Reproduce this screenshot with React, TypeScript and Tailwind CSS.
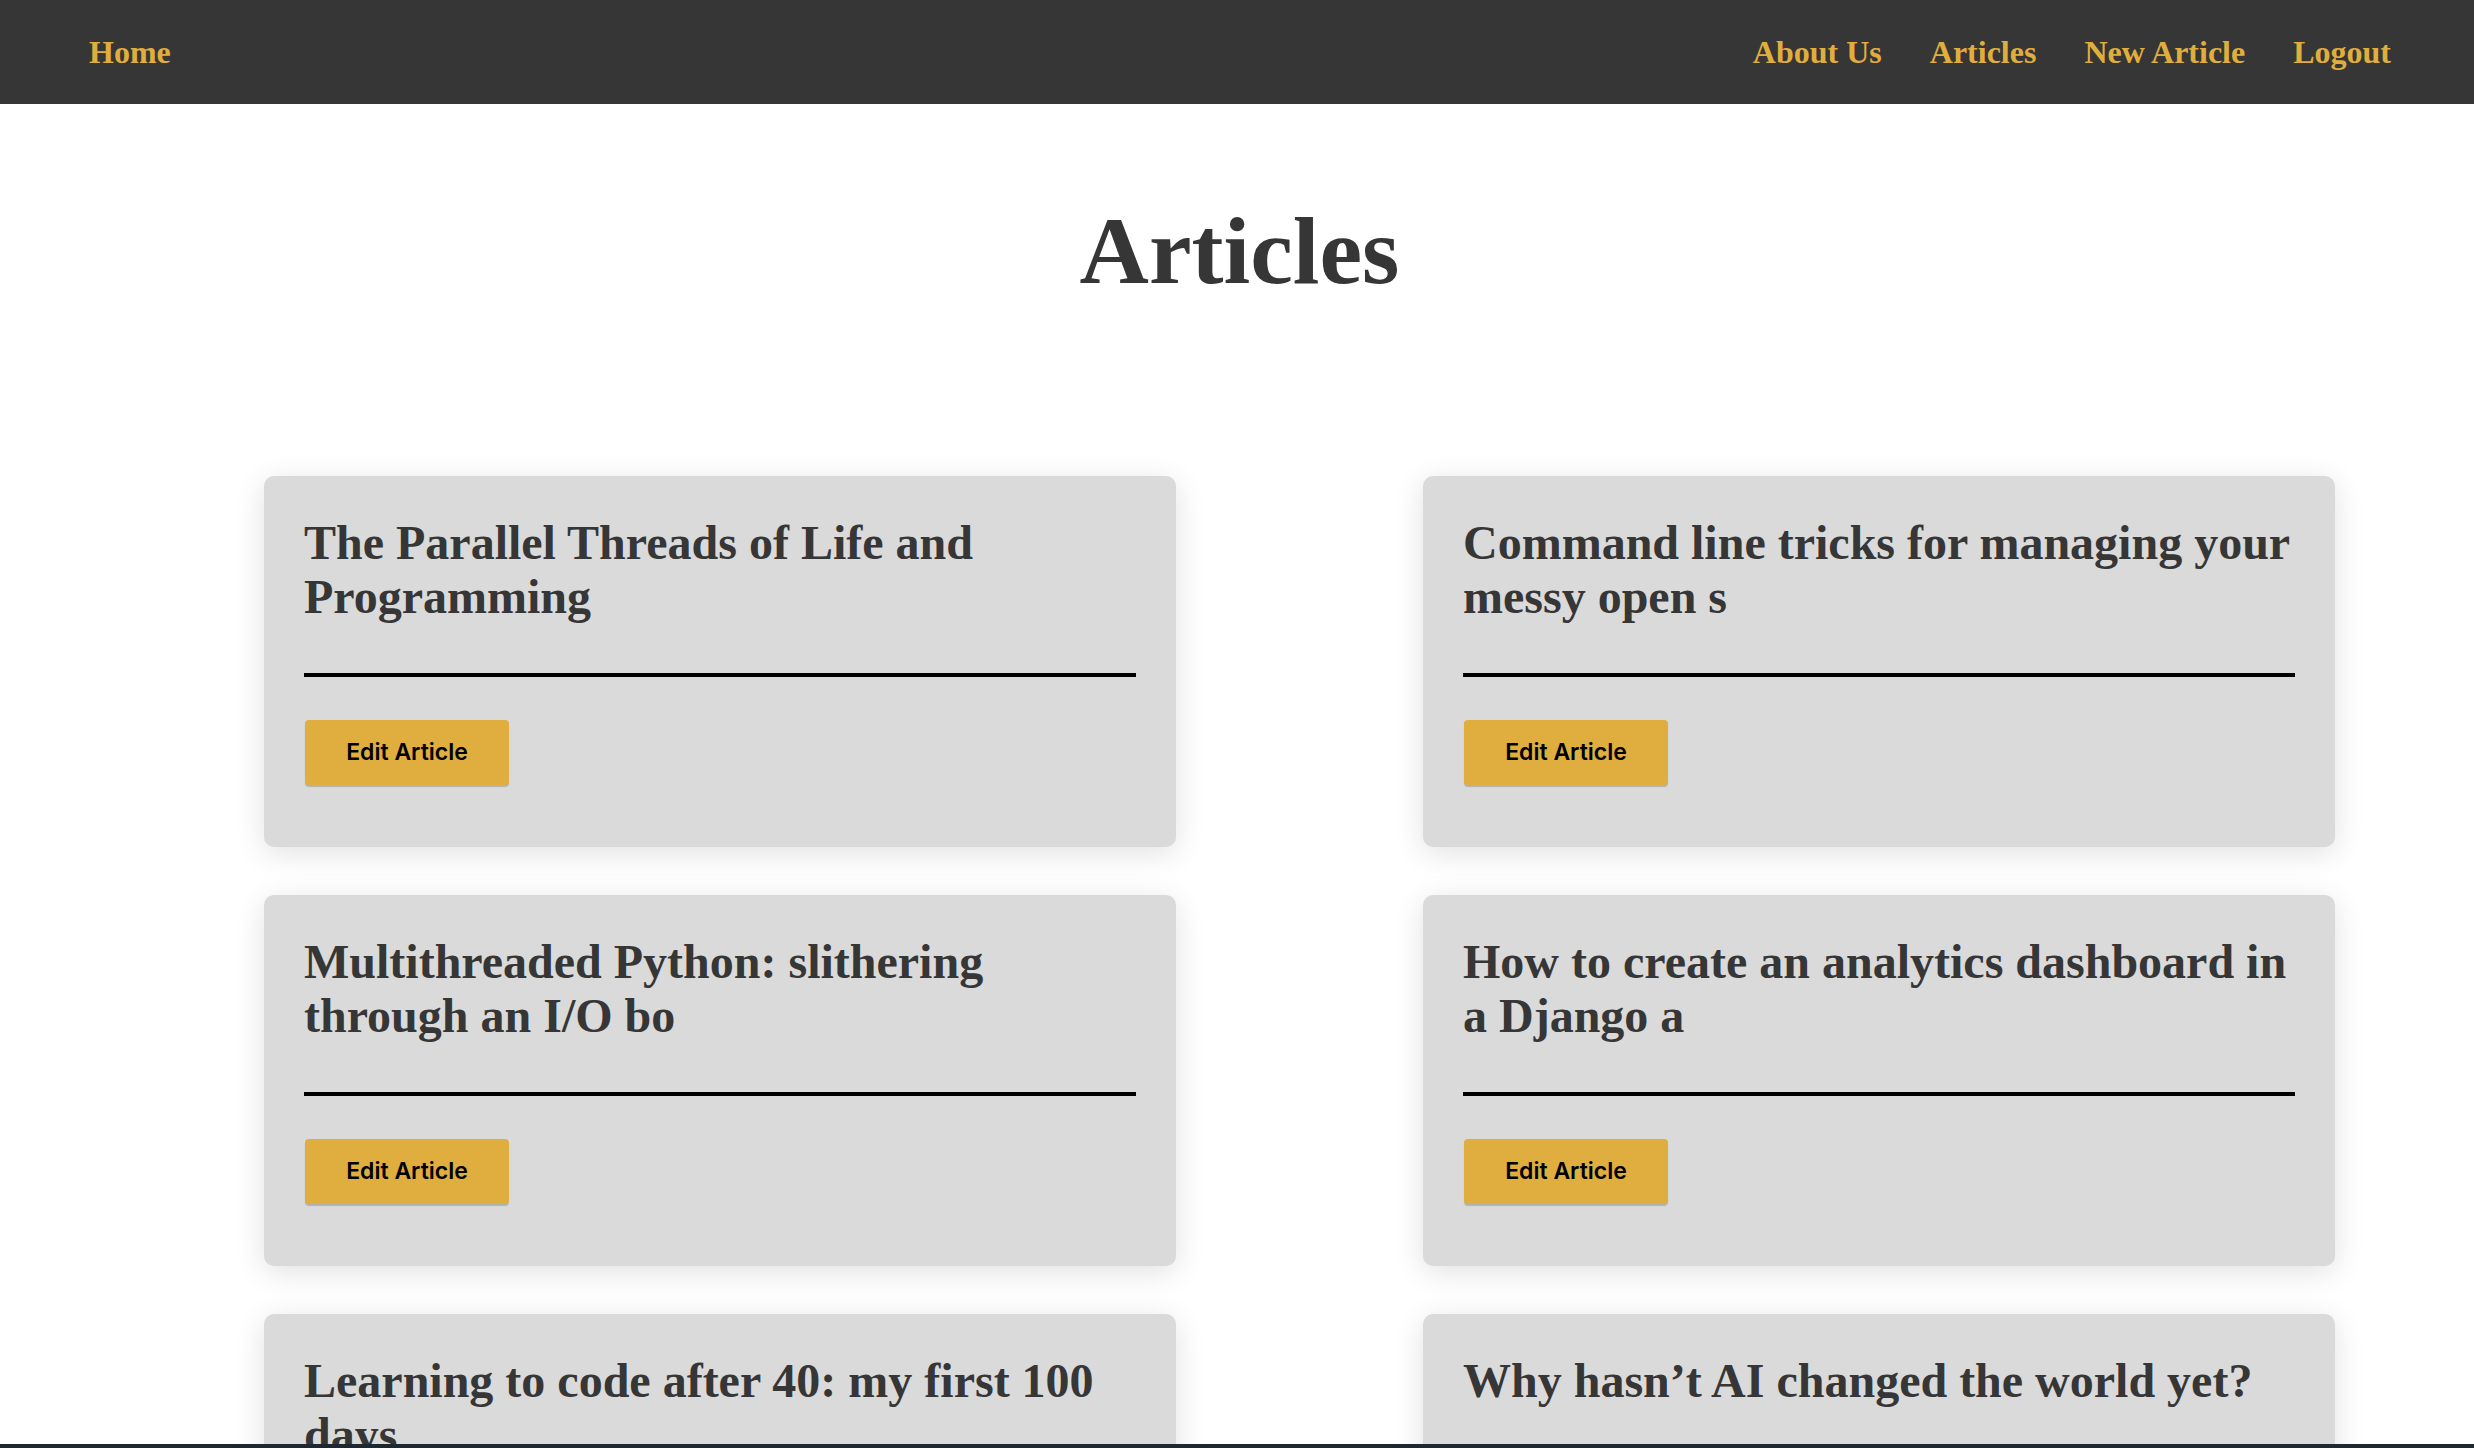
const navLinks = ["About Us", "Articles", "New Article", "Logout"];

const articles = [
  "The Parallel Threads of Life and Programming",
  "Command line tricks for managing your messy open s",
  "Multithreaded Python: slithering through an I/O bo",
  "How to create an analytics dashboard in a Django a",
  "Learning to code after 40: my first 100 days",
  "Why hasn\u2019t AI changed the world yet?",
];

function ArticleCard({ title }: { title: string }) {
  return (
    <div className="flex flex-col rounded-[10px] bg-[#dadada] px-10 pt-[40px] pb-[62px] shadow-[0_6px_30px_rgba(0,0,0,0.12)]">
      <h2 className="text-[48px] font-bold leading-[54px] text-[#363636]">{title}</h2>
      <div className="mt-[49px] h-[4px] bg-black" />
      <div className="mt-[43px] pl-[1px]">
        <button className="h-[65px] w-[204px] rounded-[4px] bg-[#dfae3e] font-['Inter',sans-serif] text-[23px] font-semibold text-black shadow-[0_2px_1px_rgba(0,0,0,0.18)]">
          Edit Article
        </button>
      </div>
    </div>
  );
}

export default function App() {
  return (
    <div className="min-h-screen bg-white font-['Liberation_Serif','Times_New_Roman',serif]">
      <nav className="flex h-[104px] items-center justify-between bg-[#363636] pl-[89px] pr-[83px]">
        <a className="text-[32px] font-bold text-[#e0ae3d]">Home</a>
        <div className="flex gap-[48px]">
          {navLinks.map((link) => (
            <a key={link} className="text-[32px] font-bold text-[#e0ae3d]">
              {link}
            </a>
          ))}
        </div>
      </nav>

      <h1 className="mt-[92px] pl-[5px] text-center text-[96px] font-bold leading-[110px] text-[#363636]">
        Articles
      </h1>

      <div className="ml-[264px] mt-[170px] grid w-[2071px] grid-cols-2 gap-x-[247px] gap-y-[48px] pb-20">
        {articles.map((title) => (
          <ArticleCard key={title} title={title} />
        ))}
      </div>

      <div className="fixed bottom-0 left-0 right-0 h-[4px] bg-[#1d2831]" />
    </div>
  );
}
